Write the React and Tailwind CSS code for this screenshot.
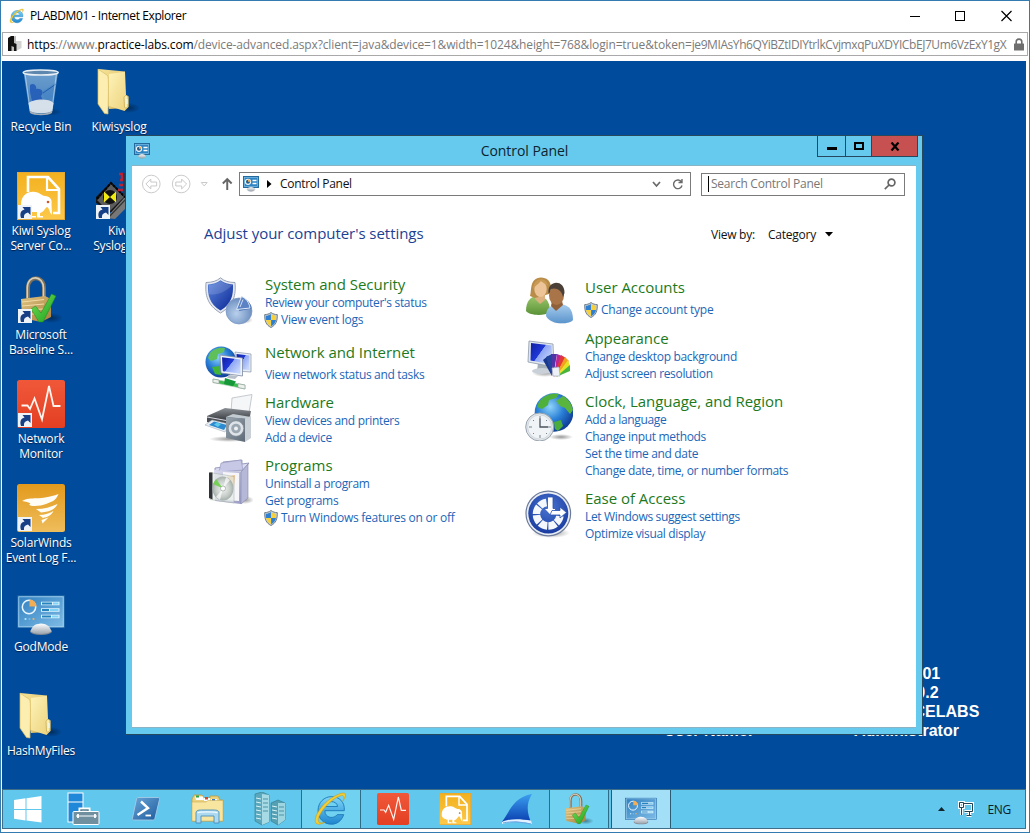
import React from "react";

function Defs() {
  const lin = (id, a, b, x2 = 0, y2 = 1) => (
    <linearGradient id={id} x1="0" y1="0" x2={x2} y2={y2}>
      <stop offset="0" stopColor={a} />
      <stop offset="1" stopColor={b} />
    </linearGradient>
  );
  return (
    <svg width="0" height="0" className="absolute">
      <defs>
        {lin("gAmber", "#f2b01e", "#fdc94a")}
        {lin("gSolar", "#e39a1c", "#eebd5c")}
        {lin("gRed", "#f0583a", "#e43f22")}
        {lin("gPanel", "#2f7fc0", "#7fbce6", 1, 1)}
        {lin("gFolderBack", "#f7e59a", "#d9b85a", 1, 1)}
        {lin("gFolderFront", "#fdf3b8", "#ecd079", 1, 1)}
        {lin("gBrass", "#e0c584", "#a77f3c", 1, 1)}
        {lin("gCheck", "#7be05a", "#17a01c", 1, 1)}
        <linearGradient id="gScreen" x1="0" y1="0" x2="1" y2="0.7">
          <stop offset="0" stopColor="#1020a0" />
          <stop offset="0.5" stopColor="#2038d8" />
          <stop offset="0.52" stopColor="#8ea6f4" />
          <stop offset="1" stopColor="#c6d6fb" />
        </linearGradient>
        {lin("gSilver", "#ffffff", "#9aa4ae")}
        {lin("gBin", "#a9cdea", "#5c93c8")}
        {lin("gShield", "#5d86dc", "#0a2796", 1, 1)}
        {lin("gPs", "#6aa6d8", "#1c5a9c", 1, 1)}
        {lin("gFin", "#3ba0f0", "#0b3fb0")}
        {lin("gGreen", "#9cc66a", "#5a9238")}
        {lin("gShirt", "#a8cdee", "#5a94cc")}
        {lin("gBox", "#dcdcf0", "#9a9cc4", 1, 1)}
        {lin("gPrinter", "#8b9096", "#2d3034")}
        {lin("gSpeaker", "#9aa6b0", "#5d6a76", 1, 1)}
        {lin("gIe", "#7fd6f8", "#1f86cf")}
        <radialGradient id="gGlobe" cx="0.4" cy="0.35" r="0.7">
          <stop offset="0" stopColor="#8fd4fa" />
          <stop offset="0.5" stopColor="#2a7fd6" />
          <stop offset="1" stopColor="#0c3690" />
        </radialGradient>
        <radialGradient id="gPie" cx="0.4" cy="0.6" r="0.7">
          <stop offset="0" stopColor="#b9d0ec" />
          <stop offset="1" stopColor="#5f83b8" />
        </radialGradient>
        <radialGradient id="gEase" cx="0.5" cy="0.35" r="0.7">
          <stop offset="0" stopColor="#4a76d2" />
          <stop offset="1" stopColor="#16379c" />
        </radialGradient>
        <radialGradient id="gDisc" cx="0.5" cy="0.5" r="0.6">
          <stop offset="0" stopColor="#f4f6f4" />
          <stop offset="0.6" stopColor="#c3cac6" />
          <stop offset="1" stopColor="#8f9a96" />
        </radialGradient>
        <radialGradient id="gShadow">
          <stop offset="0" stopColor="#000" stopOpacity="0.4" />
          <stop offset="1" stopColor="#000" stopOpacity="0" />
        </radialGradient>
      </defs>
    </svg>
  );
}

const Svg = ({ s = 48, children, className = "" }) => (
  <svg width={s} height={s} viewBox="0 0 48 48" className={`block shrink-0 ${className}`}>
    {children}
  </svg>
);

const Shortcut = () => (
  <g>
    <rect x="1" y="33" width="14" height="14" fill="#eef3f8" />
    <path d="M4 46C2.500 41 4 38.500 7.500 37.500L5.500 35H13.500V43L11 40.500C8 41 6.500 43 7 46Z" fill="#173f86" />
  </g>
);

const RecycleBin = () => (
  <Svg>
    <ellipse cx="30" cy="44" rx="15" ry="4" fill="url(#gShadow)" />
    <path d="M6.500 4L12.500 43C14 48 32 48 35.500 43L41 4Z" fill="url(#gBin)" opacity="0.65" />
    <path d="M13 17c4-3 7 1 6 4 5-1 9 3 5 7l2 5H15l-2-9z" fill="#2059b6" opacity="0.85" />
    <path d="M25 24l14-10-2 14-8 5z" fill="#4483c6" opacity="0.6" />
    <path d="M26 25L39 16" stroke="#1f5cab" strokeWidth="1" />
    <path d="M11.500 35c5-4 20-5 25 0l-1.200 8c-4 3-18 3-22.500 0z" fill="#e6eaee" opacity="0.9" />
    <path d="M12.500 42c4 5 19 5 23 0l-.5 3c-4 3-18 3-22 0z" fill="#a5adb5" />
    <path d="M8 5l5 36M39.500 5L35 41" stroke="#d6e8f7" strokeWidth="1" fill="none" opacity="0.6" />
    <ellipse cx="23.700" cy="4.500" rx="17.500" ry="2.600" fill="#5e87b0" stroke="#e9eff4" strokeWidth="1.500" />
  </Svg>
);

const Folder = () => (
  <Svg>
    <ellipse cx="34" cy="40" rx="11" ry="5" fill="url(#gShadow)" />
    <path d="M3 1L30 3.500V40L14 41Z" fill="url(#gFolderBack)" />
    <path d="M14 6L30 3.800L31 27L33.500 28.500V39L29.500 43L14 38Z" fill="url(#gFolderFront)" />
    <path d="M3 1L12.500 7.500C14 9 13.300 28 13 46L9.500 45.500L3 36Z" fill="#fbeeb0" stroke="#d8bd66" strokeWidth="0.700" />
    <path d="M29 29.500c1-3 4-2.500 4 0V38c0 2-3 3-3.500 1z" fill="#f9ecad" stroke="#c6ab56" strokeWidth="0.800" />
    <path d="M32 31v5" stroke="#e8fbff" strokeWidth="1.200" />
  </Svg>
);

const KiwiArt = () => (
  <g>
    <rect width="48" height="48" fill="url(#gAmber)" />
    <path d="M11 20V5H31L42 17V41H36" fill="none" stroke="#fff" strokeWidth="2.600" />
    <path d="M30 5V18H42" fill="none" stroke="#fff" strokeWidth="2.200" />
    <path d="M4 33C4 23 11 19 18 20C23 20.500 25 24 28 24C33 24 35.500 28 34.500 32L35 43C32 40 32.500 36 30 35C28 36 27 40 23 41V44H26V45.500H20V40H15V44H19V45.500H13V40C8 39 5 38 4 33Z" fill="#fff" />
    <circle cx="31" cy="30" r="1.300" fill="#c85a28" />
  </g>
);

const Kiwi = ({ s, link }) => (
  <Svg s={s}>
    <KiwiArt />
    <rect x="0.500" y="0.500" width="47" height="47" fill="none" stroke="#e0a73c" />
    {link && <Shortcut />}
  </Svg>
);

const KiwiSyslogger = () => (
  <Svg>
    <path d="M1 25L16 10L31 25L19 42L1 31Z" fill="#141414" />
    <path d="M2 28L16 12L29 25L14 40Z" fill="#5c5c5c" />
    <path d="M11 46L29 26H34V33L20 47Z" fill="#777" />
    <path d="M13 46L31 27" stroke="#333" strokeWidth="1.200" />
    <path d="M2 27L16 11L30 25" fill="none" stroke="#050505" strokeWidth="2" strokeDasharray="3 1" />
    <circle cx="15" cy="25" r="7" fill="#111" />
    <path d="M9 19.500L15 25L9 30.500ZM21 19.500L15 25L21 30.500Z" fill="#efea12" />
    <path d="M24 2h3v4h2M25 8h4M24 13h5M23 18h6" stroke="#be2032" strokeWidth="2.500" fill="none" />
    <path d="M29 1V24" stroke="#333" strokeWidth="1.500" />
    <Shortcut />
  </Svg>
);

const Padlock = ({ s, link }) => (
  <Svg s={s}>
    <ellipse cx="34" cy="42" rx="12" ry="5" fill="url(#gShadow)" />
    <path d="M11 24V12C11-1 27-1 27 12V24" fill="none" stroke="#7d705a" strokeWidth="4" />
    <path d="M10.300 22V12C10.300-2 26.500-1 26.500 12V24" fill="none" stroke="#d8d0bc" strokeWidth="1.600" />
    <path d="M4 23L28 20L34 23V41L24 46L5 42Z" fill="url(#gBrass)" />
    <path d="M5 26L27 23.500M5 30L27 28M5 34L27 33M5 38L27 38" stroke="#f1dca6" strokeWidth="1" />
    <path d="M14 33L18.500 30L24 37L34.500 18L39 20L26 46H22Z" fill="url(#gCheck)" stroke="#12891a" strokeWidth="0.500" />
    {link && <Shortcut />}
  </Svg>
);

const NetMonitor = ({ s, link }) => (
  <Svg s={s}>
    <rect width="48" height="48" rx="2.500" fill="url(#gRed)" />
    <path d="M4.500 25.500H10.500L13 29L17.500 18.500L25 39.500L32 6L36.500 26H43.500" fill="none" stroke="#fff4ee" strokeWidth="1.800" />
    {link && <Shortcut />}
  </Svg>
);

const SolarWinds = () => (
  <Svg>
    <rect width="48" height="48" rx="2.500" fill="url(#gSolar)" />
    <path d="M5 17C14 12 23 17 41.500 10C39 17 34 18 29 20C24 22 14 23 12 20.500C15 20 13 18 5 17Z" fill="#fffdf5" />
    <path d="M19 25C27 25 34 23 40.500 20C38 26 31 28 24 28.500Z" fill="#fffdf5" />
    <path d="M22 31C28 31 33 29 36.500 27C34 32 30 33 26 34Z" fill="#fffdf5" />
    <path d="M24.500 36L31.500 33.500L25.500 39.500Z" fill="#fffdf5" />
    <Shortcut />
  </Svg>
);

const PanelIcon = ({ s }) => (
  <Svg s={s}>
    <rect x="0.700" y="7.700" width="46.600" height="32" fill="url(#gPanel)" stroke="#1c62a0" strokeWidth="0.800" />
    <rect x="1.800" y="8.800" width="44.400" height="30" fill="none" stroke="#a9d4f0" strokeWidth="0.800" />
    <circle cx="12" cy="19" r="6.700" fill="none" stroke="#eaf6ff" strokeWidth="1.500" />
    <path d="M12.500 18.500V11.500A7 7 0 0 1 19.500 18.500Z" fill="#f2ad55" />
    <circle cx="8.500" cy="31" r="1.100" fill="#b8e6ff" />
    <circle cx="12.500" cy="31" r="1.100" fill="#68c0f0" />
    <circle cx="16.500" cy="31" r="1.100" fill="#f2b058" />
    <path d="M24 15.500H42.500M24 22H42.500M24 28.500H42.500" stroke="#dff3ff" strokeWidth="3.600" />
    <path d="M25 15.500H35M25 22H32M25 28.500H34" stroke="#2583bd" strokeWidth="1.800" />
    <path d="M36 15.500H41.500M33 22H41.500M35 28.500H41.500" stroke="#7fd3f4" strokeWidth="1.800" />
    <ellipse cx="24" cy="43.500" rx="11" ry="3.500" fill="#7e8890" />
    <path d="M13.500 43C16 36 20 36 24 35.500C29 36 32 37 34.500 43C32 47 16 47 13.500 43Z" fill="url(#gSilver)" />
  </Svg>
);

const SmallPanel = ({ className }) => (
  <svg viewBox="0 0 16 16" className={`block shrink-0 ${className}`}>
    <rect x="0.500" y="0.500" width="15" height="11" fill="#2f85c4" stroke="#246a9c" />
    <rect x="1.500" y="1.500" width="13" height="9" fill="none" stroke="#8ac7ec" strokeWidth="0.600" />
    <circle cx="5" cy="5.800" r="2.600" fill="#2a5d88" stroke="#f0f6fa" strokeWidth="1.100" />
    <path d="M5 5.800V3.200A2.600 2.600 0 0 1 7.600 5.800Z" fill="#eab05e" />
    <path d="M9.500 4.500h4M9.500 7.500h4" stroke="#fff" strokeWidth="1.300" />
    <path d="M4 13.500C5 10 11 10 12 13.500C11 16 5 16 4 13.500Z" fill="url(#gSilver)" stroke="#9aa2aa" strokeWidth="0.300" />
  </svg>
);

const IeLogo = ({ className }) => (
  <svg viewBox="0 0 32 32" className={`block shrink-0 ${className}`}>
    <path d="M27.800 17.500H10.500C10.500 24.500 19 25 21.500 21H27.300C25 27.500 20.500 29.500 16.500 29.500C9 29.500 4.500 24 4.500 17.300C4.500 10 10 5 16.500 5C23 5 28.500 9.500 27.800 17.500ZM10.700 13.800H21.800C21.500 8 11.500 8 10.700 13.800Z" fill="url(#gIe)" stroke="#1b78b8" strokeWidth="0.800" />
    <path d="M26.500 9C31 3 29 0 22.500 3C14 6 5 15.500 2.500 23C0.500 30 4.500 31 10.500 27.800C5 29.500 3.500 27.500 5.500 22.500C8.500 15.500 16 8 22.500 5C27.500 2.800 28.500 4.500 26.500 9Z" fill="#f2cd33" stroke="#c99b17" strokeWidth="0.500" />
  </svg>
);

const SecurityIcon = () => (
  <Svg>
    <ellipse cx="38" cy="43" rx="10" ry="4" fill="url(#gShadow)" />
    <path d="M15.500 0.800C19 4 24 5.500 30 5.500C31 18 29 28 15.500 36C2 28 0 18 1 5.500C7 5.500 12 4 15.500 0.800Z" fill="#e4e8f0" stroke="#8f9ab0" strokeWidth="0.900" />
    <path d="M15.500 3.300C19 6 23.500 7.300 28 7.500C28.500 18 26.500 27 15.500 33.500C4.500 27 2.500 18 3 7.500C8 7.300 12 6 15.500 3.300Z" fill="url(#gShield)" />
    <path d="M15.500 4C12 6.500 8 7.800 4 8V17C12 19 20 15 27.500 8C23 7.700 19 6.500 15.500 4Z" fill="#fff" opacity="0.150" />
    <circle cx="34" cy="34" r="13" fill="url(#gPie)" stroke="#7a98c4" strokeWidth="0.700" />
    <path d="M34 34L37 21A13 13 0 0 1 46.500 31.500Z" fill="#4a72b4" />
    <path d="M31.500 32.500L36.500 19.500C41 21.500 44 25 45 31Z" fill="#5a82c4" stroke="#dbe8f8" strokeWidth="1" />
    <path d="M35 30L38 22.500" stroke="#dbe8f8" strokeWidth="0.900" />
  </Svg>
);

const NetworkIcon = () => (
  <Svg>
    <circle cx="16" cy="18" r="15.500" fill="url(#gGlobe)" />
    <path d="M5 9C9 4 16 3 20 4L19 8L13 10L12 15L6 17L3 14Z" fill="#5fc05a" />
    <path d="M7 23L15 22L16 31L10 30Z" fill="#42b436" />
    <path d="M30 8L46 10V28L31 27Z" fill="#e8eef6" stroke="#8793a8" strokeWidth="0.700" />
    <path d="M31.500 10L44.500 11.500V26L32 25Z" fill="url(#gScreen)" />
    <path d="M15 11L37.500 14V32L16 29Z" fill="#f0f4fa" stroke="#7b89a2" strokeWidth="0.800" />
    <path d="M17 13.200L35.500 15.600V29.800L17.800 27.300Z" fill="url(#gScreen)" />
    <path d="M24 31L33 32L30 35L22 34Z" fill="#b7c0ca" />
    <path d="M8 35L40 41V45L8 38.500Z" fill="#3bbd4d" stroke="#b9c8bd" strokeWidth="0.600" />
    <path d="M8 35L14 36V39.500L8 38.500ZM33 39.700L40 41V45L33 43.500Z" fill="#edf1ee" stroke="#8fa39a" strokeWidth="0.700" />
    <path d="M20 34L31 37.500L28 42L19 40Z" fill="#16983a" />
  </Svg>
);

const HardwareIcon = () => (
  <Svg>
    <ellipse cx="24" cy="45" rx="20" ry="3" fill="url(#gShadow)" />
    <path d="M27 4L47 0.500L44 19L26 18Z" fill="#f4f6f7" stroke="#b8bec4" strokeWidth="0.800" />
    <path d="M2 22L20 14L46 17L44 28L22 28Z" fill="url(#gPrinter)" />
    <path d="M2 22L24 26V36L2 28Z" fill="#4a4e54" />
    <path d="M2 23L24 27" stroke="#d6dadf" strokeWidth="1" />
    <path d="M0 31L7 26L24 30L20 38Z" fill="#e8eef4" stroke="#98a2ac" strokeWidth="0.500" />
    <path d="M4 31L9 27.500L22 31L19 36Z" fill="#2d8ad0" />
    <path d="M9 30.500L12 28.500L16 30L13 33Z" fill="#5ac8e8" />
    <path d="M21 23L28 20L46 23L40 25Z" fill="#c3cbd2" />
    <path d="M21 23L40 24.500V48L21 44Z" fill="url(#gSpeaker)" />
    <path d="M40 24.500L46 22V44L40 48Z" fill="#c9d0d6" />
    <circle cx="31" cy="34.500" r="7.800" fill="#dde3e8" stroke="#77838e" strokeWidth="0.700" />
    <circle cx="31" cy="34.500" r="4.800" fill="#9ba7b1" />
    <circle cx="31" cy="34.500" r="2" fill="#eef2f5" />
  </Svg>
);

const ProgramsIcon = () => (
  <Svg>
    <ellipse cx="40" cy="41" rx="9" ry="4" fill="url(#gShadow)" />
    <path d="M10 9L18 8V3L37 1L37 5L44 4L37 12H10Z" fill="#dcdcf0" stroke="#8688ae" strokeWidth="0.800" />
    <path d="M16 4L36 1L38 11L14 13Z" fill="#c6c8e6" stroke="#9294ba" strokeWidth="0.600" />
    <path d="M9 11L36 13V45L10 42Z" fill="url(#gBox)" />
    <path d="M36 13L43 5V39L36 45Z" fill="#b6b8d8" stroke="#8587ad" strokeWidth="0.600" />
    <path d="M18 13L34 14L34 42L18 41Z" fill="#f5f5fa" />
    <path d="M21 18L30 16L29 28L22 30Z" fill="#efc38a" />
    <path d="M5 13.500L29 17.500V44L5 40.500Z" fill="#e4ebe6" opacity="0.700" stroke="#a3aea6" strokeWidth="0.700" />
    <path d="M4 13.500H7.500V40.500L4 39Z" fill="#303438" />
    <ellipse cx="18" cy="29.500" rx="10.500" ry="12" fill="url(#gDisc)" />
    <path d="M18 29.500L8 25L11 20Z" fill="#6fd04a" opacity="0.900" />
    <path d="M18 29.500L21 18L25 21ZM18 29.500L15 41L11 38Z" fill="#fff" opacity="0.700" />
    <circle cx="18" cy="29.500" r="2.500" fill="#fff" stroke="#98a09c" strokeWidth="0.700" />
  </Svg>
);

const UsersIcon = () => (
  <Svg>
    <ellipse cx="36" cy="44" rx="12" ry="4" fill="url(#gShadow)" />
    <path d="M1 35C1 26 5 21 11 20C20 20 25 24 25 36C20 40 5 40 1 35Z" fill="url(#gGreen)" />
    <path d="M11 18H20V24L15 28L10 23Z" fill="#ddb080" />
    <path d="M5 20C7 15 4 2 16 1.500C28 2 27 14 24 18L10 22Z" fill="#b98c49" />
    <ellipse cx="15.500" cy="13" rx="6.200" ry="8" fill="#ecc497" />
    <path d="M8 14C9 10 13 9 16 5C20 8 22 9 23 10C22 1 8 0 8 14Z" fill="#c89a54" />
    <path d="M21 40C21 32 26 29 32 28C43 28 48 32 48 44C44 49 25 49 21 40Z" fill="url(#gShirt)" />
    <path d="M27 25H37L38 29L31 35L26 30Z" fill="#90603a" />
    <ellipse cx="31.500" cy="19.500" rx="7.500" ry="9.500" fill="#a87448" />
    <path d="M23.500 17C22 4 40 3 39.500 17L38 21C37 14 31 11 26 13C24.500 15 25 19 23.500 17Z" fill="#4a4038" />
  </Svg>
);

const AppearanceIcon = () => (
  <Svg>
    <ellipse cx="20" cy="33" rx="13" ry="4" fill="url(#gShadow)" />
    <path d="M13 23H23L26 31H12Z" fill="#a5afb9" />
    <ellipse cx="17" cy="31" rx="10" ry="3" fill="#c9d0d7" />
    <path d="M4 1L28 4L29 27L3 22Z" fill="#dfe6ee" stroke="#8d99a8" strokeWidth="0.800" />
    <path d="M6 3L26.500 5.500L27.500 24.500L5.500 20.500Z" fill="url(#gScreen)" />
    <path d="M27 36L18 20L23 16Z" fill="#18368c" />
    <path d="M27 36L21 17L27 14Z" fill="#23449c" />
    <path d="M28 37L26 14L32 14Z" fill="#5033a6" />
    <path d="M29 37L32 14L37 16Z" fill="#bc2594" />
    <path d="M29 37L36 15L41 18Z" fill="#e23936" />
    <path d="M30 37L40 17L44 21Z" fill="#f2a21e" />
    <path d="M31 37L43 20L45 26Z" fill="#e5e328" />
    <path d="M31 37L45 25V31Z" fill="#48b43b" />
    <path d="M27 28L34 27L35 36H28Z" fill="#edf1f7" stroke="#9ba8ba" strokeWidth="0.600" />
  </Svg>
);

const ClockIcon = () => (
  <Svg>
    <ellipse cx="36" cy="44" rx="12" ry="3" fill="url(#gShadow)" />
    <circle cx="29" cy="19.500" r="19.300" fill="url(#gGlobe)" />
    <path d="M14 9C19 2 26 0 34 1L31 5L24 7L23 12L17 16L12 14Z" fill="#4fb03c" />
    <path d="M31 8L38 3C44 6 47 12 48 17L45 21L40 15L35 13Z" fill="#5ab53f" />
    <path d="M29 29L36 27L38 33L33 38L30 36Z" fill="#4aac3a" />
    <circle cx="14.700" cy="34" r="14" fill="#e1e6ea" stroke="#98a3ad" strokeWidth="1" />
    <circle cx="14.700" cy="34" r="12" fill="#f0f4f7" stroke="#bac3cb" strokeWidth="0.500" />
    <path d="M15 23V26M15 42V45M4 34H7M23 34H26M8 27L9 28M22 27L21 28M8 41L9 40M22 41L21 40" stroke="#7b858f" strokeWidth="1" />
    <path d="M15 25.500V34H23" stroke="#48535e" strokeWidth="1.300" fill="none" />
  </Svg>
);

const EaseIcon = () => (
  <Svg>
    <ellipse cx="26" cy="43" rx="19" ry="5" fill="url(#gShadow)" />
    <circle cx="23.300" cy="23.500" r="22.300" fill="#e9edf4" stroke="#6d7c9c" strokeWidth="1.200" />
    <circle cx="23.300" cy="23.500" r="20" fill="url(#gEase)" />
    <path d="M35 25.500A11.800 11.800 0 1 1 21.500 12.500" fill="none" stroke="#f4f7fc" strokeWidth="7.500" strokeDasharray="7.700 1.100" strokeDashoffset="-0.500" />
    <path d="M22.500 7H28V18.500H31.500L25.300 25L19 18.500H22.500Z" fill="#fff" stroke="#2850b0" strokeWidth="0.800" />
    <path d="M27 20.500H35V17L41.500 22.500L35 28V25H25Z" fill="#fff" stroke="#2850b0" strokeWidth="0.800" />
  </Svg>
);

const UacShield = () => (
  <svg viewBox="0 0 14 16" className="mr-[3px] -ml-px block h-4 w-3.5 shrink-0">
    <path d="M7 0.500C9 2 11 2.600 13.300 2.600C13.500 9 12 13 7 15.500C2 13 .5 9 .7 2.600C3 2.600 5 2 7 .5Z" fill="#c3ccd4" stroke="#68757f" strokeWidth="0.900" />
    <path d="M6.900 2V8H2C1.800 6.500 1.800 5 1.900 3.800C4 3.700 5.500 3.100 6.900 2Z" fill="#2e7fd0" />
    <path d="M7.100 2V8H12C12.200 6.500 12.200 5 12.100 3.800C10 3.700 8.500 3.100 7.100 2Z" fill="#f7d13c" />
    <path d="M2 8H6.900V14.200C4 12.800 2.500 10.500 2 8Z" fill="#f7d13c" />
    <path d="M12 8H7.100V14.200C10 12.800 11.500 10.500 12 8Z" fill="#2e7fd0" />
  </svg>
);

const desktop1 = [
  { icon: <RecycleBin />, lines: ["Recycle Bin"] },
  { icon: <Kiwi link />, lines: ["Kiwi Syslog", "Server Co..."] },
  { icon: <Padlock link />, lines: ["Microsoft", "Baseline S..."] },
  { icon: <NetMonitor link />, lines: ["Network", "Monitor"] },
  { icon: <SolarWinds />, lines: ["SolarWinds", "Event Log F..."] },
  { icon: <PanelIcon />, lines: ["GodMode"] },
  { icon: <Folder />, lines: ["HashMyFiles"] },
];
const desktop2 = [
  { icon: <Folder />, lines: ["Kiwisyslog"] },
  { icon: <KiwiSyslogger />, lines: ["Kiwi", "Syslogger"] },
];

function DesktopColumn({ items }) {
  return (
    <div className="flex w-[78px] flex-col">
      {items.map((it) => (
        <div key={it.lines[0]} className="flex h-[104px] flex-col items-center">
          {it.icon}
          <div className="mt-[3px] text-center text-[12px] leading-[15px] tracking-[-0.17px] whitespace-nowrap text-white [text-shadow:0_1px_1px_#00204a]">
            {it.lines.map((l) => (
              <div key={l}>{l}</div>
            ))}
          </div>
        </div>
      ))}
    </div>
  );
}

function Category({ icon, title, links, className = "", gap = "", iconClass = "pt-px" }) {
  return (
    <div className={`flex ${className}`}>
      <div className={`mr-3 w-12 shrink-0 ${iconClass}`}>{icon}</div>
      <div className="whitespace-nowrap">
        <div className="h-[19px] text-[15px] leading-[18px] tracking-[-0.03px] text-[#1c7a1c]">{title}</div>
        <div className={gap}>
          {links.map(([text, shield]) => (
            <div key={text} className="flex h-[17px] items-center text-[12px] leading-[17px] tracking-[-0.33px] text-[#1b66b8]">
              {shield && <UacShield />}
              <span className={shield ? "tracking-[-0.25px]" : ""}>{text}</span>
            </div>
          ))}
        </div>
      </div>
    </div>
  );
}

function ControlPanel() {
  return (
    <div className="absolute top-[74px] left-[123px] flex h-[600px] w-[798px] flex-col border border-[#26475c] bg-[#65caed] px-1.5 pb-1.5">
      <div className="flex h-[29px] shrink-0 items-start">
        <SmallPanel className="mt-[7px] ml-[2px] h-4 w-4" />
        <div className="mt-[5px] flex-1 pl-[82px] text-center text-[14px] leading-5 tracking-[-0.05px] text-[#0c2430]">Control Panel</div>
        <div className="-mr-[2px] flex h-[21px] border border-t-0 border-[#26475c]">
          <div className="flex w-[28px] items-center justify-center border-r border-[#26475c]">
            <div className="mt-[4px] h-[3px] w-[10px] bg-black" />
          </div>
          <div className="flex w-[26px] items-center justify-center border-r border-[#26475c]">
            <div className="h-[8px] w-[10px] border-2 border-black" />
          </div>
          <div className="flex w-[45px] items-center justify-center bg-[#c75050]">
            <svg viewBox="0 0 10 9" className="h-[9px] w-[10px]">
              <path d="M1.500 .5L8.500 8.500M8.500 .5L1.500 8.500" stroke="#000" strokeWidth="2.200" />
            </svg>
          </div>
        </div>
      </div>
      <div className="flex flex-1 flex-col border-y border-[#8ab4c6] bg-white">
        <div className="mt-[6px] flex h-6 shrink-0 items-center pl-[9px]">
          <svg viewBox="0 0 100 24" className="h-6 w-[98px]" fill="none" stroke="#c9c9c9">
            <circle cx="10.500" cy="12" r="9" />
            <circle cx="41" cy="12" r="9" />
            <path d="M5 12L10 7V10H16V14H10V17Z" />
            <path d="M46.500 12L41.500 7V10H35.500V14H41.500V17Z" />
            <path d="M61.500 10.500H67.500L64.500 14Z" />
            <path d="M88 18V7M83.500 11.500L88 7L92.500 11.500" stroke="#666" strokeWidth="2" />
          </svg>
          <div className="flex h-6 w-[452px] items-center border border-[#7b7b7b] pl-[3px]">
            <SmallPanel className="h-4 w-4" />
            <svg viewBox="0 0 5 8" className="ml-2 h-[8px] w-[5px]"><path d="M0 0L4.500 4L0 8Z" fill="#000" /></svg>
            <span className="ml-2 flex-1 text-[12px] tracking-[-0.3px] text-[#111]">Control Panel</span>
            <svg viewBox="0 0 36 12" className="mr-1 h-3 w-9" fill="none" stroke="#6a6a6a">
              <path d="M3 4L6.500 8L10 4" strokeWidth="1.700" />
              <path d="M31.500 4A4.300 4.300 0 1 0 32 7.500M32 1V4.500H28.500" strokeWidth="1.400" />
            </svg>
          </div>
          <div className="ml-2.5 flex h-[23px] w-[204px] items-center border border-[#7b7b7b] pl-1.5">
            <div className="h-4 w-px bg-black" />
            <span className="ml-0.5 flex-1 text-[12px] tracking-[-0.25px] text-[#777]">Search Control Panel</span>
            <svg viewBox="0 0 12 12" className="mr-2 h-3 w-3" fill="none" stroke="#666" strokeWidth="1.700">
              <circle cx="7.500" cy="4.500" r="3.400" />
              <path d="M5 7L.8 11.200" />
            </svg>
          </div>
        </div>
        <div className="mt-[26px] flex h-[22px] shrink-0 items-center pl-[72px]">
          <span className="w-[507px] text-[15px] tracking-[-0.05px] whitespace-nowrap text-[#1c3f94]">Adjust your computer's settings</span>
          <div className="flex items-center pt-1 text-[12px] tracking-[-0.25px] text-[#111]">
            <span className="w-[57px]">View by:</span>
            <span className="w-[57px]">Category</span>
            <svg viewBox="0 0 8 5" className="-mt-px h-[5px] w-2"><path d="M0 0H8L4 4.500Z" fill="#000" /></svg>
          </div>
        </div>
        <div className="mt-[31px] flex pl-[73px]">
          <div className="w-[320px]">
            <Category icon={<SecurityIcon />} title="System and Security" className="h-[68px]" iconClass="pt-0.5" links={[["Review your computer's status"], ["View event logs", true]]} />
            <Category icon={<NetworkIcon />} title="Network and Internet" className="h-[50px]" gap="pt-1" links={[["View network status and tasks"]]} />
            <Category icon={<HardwareIcon />} title="Hardware" className="h-[63px]" links={[["View devices and printers"], ["Add a device"]]} />
            <Category icon={<ProgramsIcon />} title="Programs" iconClass="pt-[3px]" links={[["Uninstall a program"], ["Get programs"], ["Turn Windows features on or off", true]]} />
          </div>
          <div className="pt-[3px]">
            <Category icon={<UsersIcon />} iconClass="-mt-[2px]" title="User Accounts" className="h-[51px]" gap="pt-1" links={[["Change account type", true]]} />
            <Category icon={<AppearanceIcon />} iconClass="pt-[11px]" title="Appearance" className="h-[63px]" links={[["Change desktop background"], ["Adjust screen resolution"]]} />
            <Category icon={<ClockIcon />} title="Clock, Language, and Region" className="h-[97px]" links={[["Add a language"], ["Change input methods"], ["Set the time and date"], ["Change date, time, or number formats"]]} />
            <Category icon={<EaseIcon />} title="Ease of Access" links={[["Let Windows suggest settings"], ["Optimize visual display"]]} />
          </div>
        </div>
      </div>
    </div>
  );
}

const WindowsFlag = () => (
  <svg viewBox="0 0 28 27" className="h-[27px] w-7" fill="#fff">
    <path d="M0 4L11.500 2.300V12.900H0ZM12.500 2.200L27.500 0V12.900H12.500ZM0 13.900H11.500V24.500L0 22.800ZM12.500 13.900H27.500V26.500L12.500 24.600Z" />
  </svg>
);

const ServerManager = () => (
  <svg viewBox="0 0 34 34" className="h-[34px] w-[34px]">
    <rect x="1" y="1" width="15" height="29" fill="#1f88d8" stroke="#fff" />
    <path d="M1 10H16" stroke="#fff" />
    <path d="M13 20V17H22V20" fill="none" stroke="#fff" strokeWidth="3" />
    <path d="M14 20V18H21V20" fill="none" stroke="#5d8090" strokeWidth="1.500" />
    <rect x="6" y="19.500" width="26" height="13" rx="1" fill="#7090a0" stroke="#fff" />
    <path d="M9 24H30" stroke="#fff" />
    <path d="M11 22V26M28 22V26" stroke="#fff" strokeWidth="1.800" />
  </svg>
);

const PowerShell = () => (
  <svg viewBox="0 0 28 24" className="h-6 w-7">
    <path d="M6 .5H26C27.500 .5 27.800 1.500 27.500 2.500L23 21C22.700 22.500 22 23 20.500 23H1.500C.5 23 .2 22 .5 21L4.500 2C4.800 1 5.300 .5 6 .5Z" fill="url(#gPs)" stroke="#a6cae6" strokeWidth="0.900" />
    <path d="M9 4.500L16 11L5.500 18" fill="none" stroke="#fff" strokeWidth="2.400" />
    <path d="M13.500 18.500H19" stroke="#fff" strokeWidth="1.800" />
  </svg>
);

const Explorer = () => (
  <svg viewBox="0 0 34 32" className="h-8 w-[34px]">
    <path d="M1 6L3 2H11L13 5H19V3H27L29 7H32V28H1Z" fill="#ecd27c" stroke="#b79a48" strokeWidth="0.800" />
    <path d="M4 3.500H12L13 7H5Z" fill="#fff" />
    <path d="M5 2.500H8V4.500H5Z" fill="#2fa040" />
    <path d="M13 5H19V8H13Z" fill="#fff" />
    <path d="M14 4H17V6.500H14Z" fill="#d2492e" />
    <path d="M20 6H26V10H20Z" fill="#fff" />
    <path d="M21 6H24V8H21Z" fill="#3879c4" />
    <path d="M1 9H15L17 7.500H32V28H1Z" fill="#f8e6a0" stroke="#cbb05e" strokeWidth="0.600" />
    <path d="M5 30V20C5 17 8 17 12 17H22C26 17 28 17.500 28 20V30H23V23H10V30Z" fill="#acd9f0" stroke="#4b8fb8" strokeWidth="0.900" />
    <path d="M6.500 20C8 18.500 25 18.500 26.500 20" stroke="#effaff" strokeWidth="1.300" fill="none" />
  </svg>
);

const Servers = () => (
  <svg viewBox="0 0 32 34" className="h-[34px] w-8">
    <path d="M1 2L8 0L15 3V30L8 33L1 29Z" fill="#5ba7bb" stroke="#34788c" strokeWidth="0.600" />
    <path d="M8 2L15 3V30L8 33Z" fill="#a6dbe6" />
    <path d="M2 6L7 7M2 10L7 11M2 14L7 15M2 18L7 19M2 22L7 23M2 26L7 27" stroke="#d8f4f8" />
    <path d="M9 7H14M9 11H14M9 15H14M9 19H14" stroke="#4e93a6" />
    <path d="M17 11L24 8L31 11V28L24 33L17 29Z" fill="#559fb2" stroke="#34788c" strokeWidth="0.600" />
    <path d="M24 11L31 11V28L24 33Z" fill="#9dd5e1" />
    <path d="M18 14L23 15M18 18L23 19M18 22L23 23M18 26L23 27" stroke="#d8f4f8" />
    <path d="M25 15H30M25 19H30M25 23H30" stroke="#4e93a6" />
  </svg>
);

const SharkFin = () => (
  <svg viewBox="0 0 32 32" className="h-8 w-8">
    <path d="M1 29C8 20 12 4 31 1C24 12 27 22 30 29Z" fill="url(#gFin)" />
    <path d="M1 29C9 25 20 26 30 27.500L31 31C20 28 10 28 1 31Z" fill="#e1f1ff" />
    <path d="M2 30C11 28 20 29 30 31" stroke="#6aa2e0" fill="none" />
  </svg>
);

const taskItems = [
  { icon: <WindowsFlag />, w: "w-[49px]" },
  { icon: <ServerManager />, w: "w-[63px]" },
  { icon: <PowerShell />, w: "w-[62px]" },
  { icon: <Explorer />, w: "w-[62px]" },
  { icon: <Servers />, w: "w-[62px]" },
  { icon: <IeLogo className="h-9 w-9" />, w: "w-[60px]", state: "border-x border-[#2e6d88] bg-[#70d1f0]" },
  { icon: <NetMonitor s={32} />, w: "w-[64px]" },
  { icon: <Kiwi s={32} />, w: "w-[60px]" },
  { icon: <SharkFin />, w: "w-[64px]" },
  { icon: <Padlock s={32} />, w: "w-[60px]", state: "border-x border-[#2e6d88] bg-[#70d1f0]" },
  { icon: <PanelIcon s={32} />, w: "w-[60px]", state: "ml-0.5 border border-y-0 border-[#2b5c74] bg-[#a3e0f8]" },
];

function Taskbar() {
  return (
    <div className="absolute inset-x-0 bottom-0 flex h-10 items-stretch border border-[#3f6f88] bg-[#61c7ec]">
      {taskItems.map((t, i) => (
        <div key={i} className={`flex shrink-0 items-center justify-center ${t.w} ${t.state || ""}`}>{t.icon}</div>
      ))}
      <div className="flex flex-1 items-center justify-end pr-3.5">
        <svg viewBox="0 0 7 4" className="mr-[13px] h-1 w-[7px]"><path d="M0 4L3.500 0L7 4Z" fill="#12242c" /></svg>
        <svg viewBox="0 0 16 16" className="mr-[13px] h-4 w-4" fill="none">
          <path d="M5.500 2.500H14.500V10.500H6.500M8.500 14.500H13.500M11.500 11V14" stroke="#fff" strokeWidth="3" />
          <path d="M1.500 1.500H5.500V6.500H1.500ZM3.500 6.500V14" stroke="#fff" strokeWidth="2.800" />
          <path d="M5.500 2.500H14.500V10.500H6.500M8.500 14.500H13.500M11.500 11V14" stroke="#20414f" strokeWidth="1" />
          <path d="M1.500 1.500H5.500V6.500H1.500ZM3.500 6.500V14" stroke="#20414f" strokeWidth="1" />
        </svg>
        <span className="pt-px text-[12px] tracking-[-0.3px] text-[#0d2029]">ENG</span>
      </div>
    </div>
  );
}

export default function App() {
  return (
    <div className="flex h-[833px] w-[1030px] flex-col overflow-hidden border border-[#347cb0] bg-white font-['Open_Sans','Noto_Sans',sans-serif]">
      <Defs />
      <div className="flex h-[31px] shrink-0 items-center pb-px pl-2">
        <IeLogo className="h-4 w-4" />
        <span className="ml-[5px] flex-1 text-[12px] tracking-[-0.4px] text-black">PLABDM01 - Internet Explorer</span>
        <svg viewBox="0 0 104 12" className="mr-4 h-3 w-[104px]" fill="none" stroke="#000">
          <path d="M1 6.500H11" />
          <rect x="46.500" y="1.500" width="9" height="9" />
          <path d="M92.500 1L102.500 11M102.500 1L92.500 11" strokeWidth="1.200" />
        </svg>
      </div>
      <div className="ml-px flex h-6 w-[1026px] shrink-0 items-center border border-[#a9a9a9]">
        <svg viewBox="0 0 16 16" className="ml-1 h-4 w-4">
          <path d="M4 1L9 0V15H4Z" fill="#bbb" />
          <path d="M9 5H14.500V12L9 15Z" fill="#d2d2d2" />
          <path d="M1 2L4 0H7V7L9.500 8V15H7V11L4.500 10V15H1Z" fill="#111" />
        </svg>
        <div className="ml-1 w-[980px] overflow-hidden pt-px text-[12px] tracking-[-0.13px] whitespace-nowrap text-[#7b7b7b]">
          <span className="text-black">https</span>://www.<span className="text-black">practice-labs.com</span>
          /device-advanced.aspx?client=java&amp;device=1&amp;width=1024&amp;height=768&amp;login=true&amp;token=<span className="tracking-[-0.42px]">je9MIAsYh6QYiBZtIDIYtrlkCvjmxqPuXDYICbEJ7Um6VzExY1gX</span>
        </div>
        <svg viewBox="0 0 10 13" className="ml-[7px] h-[13px] w-2.5">
          <path d="M2.200 6V3.800C2.200 .2 7.800 .2 7.800 3.800V6" fill="none" stroke="#6e6e6e" strokeWidth="1.600" />
          <rect y="5.500" width="10" height="7" rx="0.500" fill="#6e6e6e" />
        </svg>
      </div>
      <div className="relative mt-[5px] ml-px h-[768px] w-[1024px] shrink-0 overflow-hidden bg-[#004b9c]">
        <div className="flex pt-[7px]">
          <DesktopColumn items={desktop1} />
          <DesktopColumn items={desktop2} />
        </div>
        <div className="absolute top-[603px] left-[662px] grid grid-cols-[190px_auto] font-['Liberation_Sans',Arial,sans-serif] text-[16px] leading-[19px] font-bold text-white">
          <span>Host Name:</span><span>PLABDM01</span>
          <span>IP Address:</span><span>192.168.0.2</span>
          <span>Domain:</span><span>PRACTICELABS</span>
          <span>User Name:</span><span>Administrator</span>
        </div>
        <ControlPanel />
        <Taskbar />
      </div>
    </div>
  );
}
